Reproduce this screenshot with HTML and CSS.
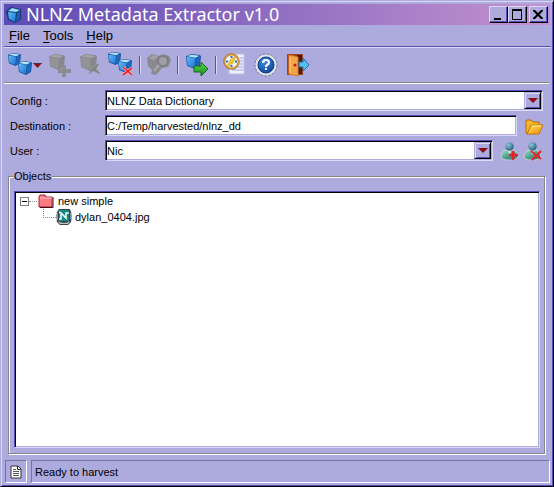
FILE: index.html
```html
<!DOCTYPE html>
<html lang="en">
<head>
<meta charset="utf-8">
<meta name="viewport" content="width=device-width, initial-scale=1">
<title>NLNZ Metadata Extractor v1.0</title>
<link rel="stylesheet" href="styles.css">
</head>
<body>
<svg class="defs" aria-hidden="true">
  <defs>
    <linearGradient id="face" x1="0" y1="0" x2="1" y2="1"><stop offset="0" stop-color="#5cbcfa"/><stop offset="1" stop-color="#2173d2"/></linearGradient>
    <linearGradient id="gold" x1="0" y1="0" x2="1" y2="1"><stop offset="0" stop-color="#ffe35a"/><stop offset="1" stop-color="#f08a08"/></linearGradient>
    <linearGradient id="green" x1="0" y1="0" x2="0" y2="1"><stop offset="0" stop-color="#5bdc4c"/><stop offset="1" stop-color="#138a1c"/></linearGradient>
    <linearGradient id="body" x1="0" y1="0" x2="1" y2="1"><stop offset="0" stop-color="#a8dcc8"/><stop offset=".5" stop-color="#4fa08c"/><stop offset="1" stop-color="#2c6c70"/></linearGradient>
    <radialGradient id="head" cx=".35" cy=".3" r=".8"><stop offset="0" stop-color="#8fc6d6"/><stop offset="1" stop-color="#1f5575"/></radialGradient>
    <radialGradient id="ball" cx=".4" cy=".3" r=".8"><stop offset="0" stop-color="#3f8fe0"/><stop offset="1" stop-color="#0b3c94"/></radialGradient>
    <symbol id="cube" viewBox="0 0 14 14">
      <path d="M0 2 5 0l8 1 1 1-1 9-5 3-7-3z" fill="#17509c"/>
      <path d="M1 2 5 .6l7.500 1L9 3.600z" fill="#b4e4ff"/>
      <path d="M.6 2.600 8.600 4 8 13 1.600 10.500z" fill="url(#face)"/>
      <path d="M9.200 4 13.200 2l-.8 8.500L8.700 13z" fill="#1d68bd"/>
    </symbol>
    <symbol id="graycube" viewBox="0 0 14 14">
      <path d="M0 2 5 0l8 1 1 1-1 9-5 3-7-3z" fill="#88888c"/>
      <path d="M1 2 5 .6l7.500 1L9 3.600z" fill="#a4a4a8"/>
      <path d="M.6 2.600 8.600 4 8 13 1.600 10.500z" fill="#939397"/>
    </symbol>
    <symbol id="user" viewBox="0 0 20 20">
      <path d="M1 16q0-6 6-7h5q5 1 6 7-2 3-9 3t-8-3z" fill="url(#body)" stroke="#d2dce2" stroke-width=".7"/>
      <path d="m7 9 2.500 5L12 9z" fill="#c4e7cd"/>
      <circle cx="9.500" cy="5.500" r="4.200" fill="url(#head)"/>
    </symbol>
  </defs>
</svg>
<div class="window">
  <header class="titlebar">
    <svg class="app-icon" viewBox="0 0 16 16" aria-hidden="true"><path d="M0 4 5 0l10 2v10l-6 4-7-3z" fill="#123a70"/><path d="m2 4 4-3 8 2-4 2z" fill="#9adcff"/><path d="m2 5 8 1-1 9-6-3z" fill="url(#face)"/><path d="m11 6 3-2v7l-4 4z" fill="#1b5faf"/></svg>
    <h1>NLNZ Metadata Extractor v1.0</h1>
    <div class="window-buttons">
      <button type="button" aria-label="Minimize"><svg viewBox="0 0 14 13"><path d="M3 10h7v2H3z"/></svg></button>
      <button type="button" aria-label="Maximize"><svg viewBox="0 0 14 13"><path fill-rule="evenodd" d="M2 1h10v11H2zm1 2v8h8V3z"/></svg></button>
      <button type="button" class="close" aria-label="Close"><svg viewBox="0 0 14 13"><path d="M2 2h2l3 3 3-3h2v1L8.500 6.500 12 10v1h-2L7 8l-3 3H2v-1l3.500-3.500L2 3z"/></svg></button>
    </div>
  </header>
  <nav class="menubar">
    <button type="button"><u>F</u>ile</button>
    <button type="button"><u>T</u>ools</button>
    <button type="button"><u>H</u>elp</button>
  </nav>
  <div class="toolbar" role="toolbar" aria-label="Main">
    <div class="tools">
      <button type="button" class="split" aria-label="New object">
        <svg class="icon" viewBox="0 0 24 24"><use href="#cube" width="13" height="13"/><use href="#cube" x="10" y="8" width="14" height="14"/></svg>
        <svg class="drop" viewBox="0 0 9 5"><path d="M0 0h9L4.500 5z" fill="#8c1018"/><path d="M0 0h9L8 1H1z" fill="#4a3040"/></svg>
      </button>
      <button type="button" disabled aria-label="Add object"><svg class="icon" viewBox="0 0 24 24"><use href="#graycube" y="1" width="16" height="16"/><path d="M13 12h4v4h5v4h-5v4h-4v-4H9v-4h4z" fill="#8d8d91"/></svg></button>
      <button type="button" disabled aria-label="Edit object"><svg class="icon" viewBox="0 0 24 24"><use href="#graycube" x="1" y="1" width="17" height="17"/><path d="m10 12 4 3 5-5 1 1-3 5 4 4-1 1-5-3-5 3v-1l3-4z" fill="#808085" stroke="#a2a2a8" stroke-width=".6"/></svg></button>
      <button type="button" aria-label="Delete object"><svg class="icon" viewBox="0 0 24 24"><use href="#cube" x="-1" y="-1" width="13" height="13"/><use href="#cube" x="9" y="6" width="14" height="14"/><path d="m14 14 9 8m0-7-9 7" fill="none" stroke="#f6b9c4" stroke-width="3"/><path d="m14 14 9 8m0-7-9 7" fill="none" stroke="#ed2027" stroke-width="1.600"/></svg></button>
    </div>
    <div class="tools">
      <button type="button" disabled aria-label="View"><svg class="icon" viewBox="0 0 24 24"><path d="M0 5 5 1l7 2 4-2 6 2 2 5-3 6-6 1-6 7-5-1 1-4-4-4z" fill="#8b8b8f"/><circle cx="16" cy="8" r="5" fill="#a0a0a4" stroke="#7e7e82" stroke-width="2"/><path d="m12 12-5 6" stroke="#a6a6ab" stroke-width="2"/><path d="m2 5 5-3 4 2-4 3z" fill="#a2a2a6"/></svg></button>
    </div>
    <div class="tools">
      <button type="button" aria-label="Harvest"><svg class="icon" viewBox="0 0 24 24"><use href="#cube" x="1" y="1" width="15" height="15"/><path d="M9 13h7V9l7 7-7 7v-4H9z" fill="url(#green)" stroke="#12681c"/></svg></button>
    </div>
    <div class="tools wide">
      <button type="button" aria-label="Options"><svg class="icon" viewBox="0 0 24 24"><path d="M9 1h12v20H6V12z" fill="#eef0ff" stroke="#b8bce4"/><path d="M17 5h3m-3 3h3m-3 3h3m-6 3h6M9 17h11" stroke="#9ca3dc"/><circle cx="8.500" cy="8.500" r="7" fill="#eef4fc" stroke="#d69a40" stroke-width="2"/><circle cx="8.500" cy="8.500" r="8" fill="none" stroke="#946126" stroke-width=".5"/><path d="M8.500 3v2m0 7v2M3 8.500h2m7 0h2" stroke="#3472b8" stroke-width="2"/><path d="m13 3-3 7-6 4 3-7z" fill="#f4ca24" stroke="#c39512" stroke-width=".5"/></svg></button>
      <button type="button" aria-label="Help"><svg class="icon" viewBox="0 0 24 24"><circle cx="11" cy="12" r="11" fill="#dfe3ed" stroke="#747c94" stroke-dasharray="3 1"/><circle cx="11" cy="12" r="8" fill="url(#ball)" stroke="#113c80"/><path d="M8 10q0-3 3-3t3 2.500q0 1.500-2 2.500-1 .5-1 2" fill="none" stroke="#fff" stroke-width="2.200"/><path d="M10 15h2v2h-2z" fill="#fff"/></svg></button>
      <button type="button" aria-label="Exit"><svg class="icon" viewBox="0 0 24 24"><path d="M0 1h16v21H0z" fill="#9f4314"/><path d="M10 2h5v19h-5z" fill="#4b1c0e"/><path d="m2 2 9 2v19l-9-2z" fill="#f4a447" stroke="#d97825"/><path d="M3 4v16" stroke="#ffd286"/><circle cx="8" cy="12" r="1.500" fill="#c5161b"/><path d="M12 9h4V5l6 7-6 6v-4h-4z" fill="#58bdf0" stroke="#1a73ac"/></svg></button>
    </div>
  </div>
  <main>
    <form class="form">
      <label for="config">Config :</label>
      <div class="line"><div class="combo"><select id="config"><option>NLNZ Data Dictionary</option></select><span class="arrow"></span></div></div>
      <label for="destination">Destination :</label>
      <div class="line">
        <input id="destination" type="text" value="C:/Temp/harvested/nlnz_dd">
        <button type="button" class="browse" aria-label="Browse"><svg viewBox="0 0 18 16"><path d="M1 2q0-1 1-1h4l2 2h6v4H7l-4 8H2l-1-1z" fill="#f6b52d" stroke="#b66b05"/><path d="M6 6h12l-4 9H2z" fill="url(#gold)" stroke="#c47605"/><path d="M7 7h9" stroke="#fff2a0"/></svg></button>
      </div>
      <label for="user-name">User :</label>
      <div class="line">
        <div class="combo"><select id="user-name"><option>Nic</option></select><span class="arrow"></span></div>
        <div class="user-actions">
          <button type="button" aria-label="Add user"><svg viewBox="0 0 20 20"><use href="#user"/><path d="M13 10v9m-4-5h9" stroke="#ee2024" stroke-width="2.500"/></svg></button>
          <button type="button" aria-label="Delete user"><svg viewBox="0 0 20 20"><use href="#user"/><path d="m8 10 10 8m0-8-9 9" stroke="#ee2024" stroke-width="2"/></svg></button>
        </div>
      </div>
    </form>
    <section class="objects" aria-labelledby="objects-title">
      <h2 id="objects-title">Objects</h2>
      <ul class="tree">
        <li>
          <div class="node"><button type="button" class="toggle" aria-label="Collapse"></button><span class="dots"></span>
            <svg class="folder" viewBox="0 0 16 14"><path d="M1 3 2 1h5l1 2h6v10H1z" fill="#fb7a84" stroke="#b01c2c"/><path d="M15 3v10.500H2" fill="none" stroke="#3c1018"/><path d="M2 4h12" stroke="#ffc8cc"/></svg>
            <span>new simple</span></div>
          <ul>
            <li class="node child"><span class="elbow"></span>
              <svg class="file" viewBox="0 0 16 16"><path d="M3 0h11l1 3 1 4-1 6-3 3H4l-3-3-1-6 1-4z" fill="#35454c"/><path d="M3 1h10v11H3z" fill="#138784"/><path d="m3 3 2 1 5 5V4h3M5 5v5H3" fill="none" stroke="#effcff" stroke-width="1.600"/><path d="M2 12q6 4 12 0l-2 3H4z" fill="#b7c5ca"/><path d="M1 4v7M15 4v6" stroke="#c6eeef"/></svg>
              <span>dylan_0404.jpg</span></li>
          </ul>
        </li>
      </ul>
    </section>
  </main>
  <footer class="statusbar">
    <div class="cell"><svg viewBox="0 0 12 14" aria-hidden="true"><path d="M1 1h7l3 3v9H1z" fill="#fff" stroke="#333"/><path d="M7.500 1v3.500H11" fill="none" stroke="#333"/><path d="M3 4.500h3m-3 2h6m-6 2h6m-6 2h6" stroke="#555"/></svg></div>
    <div class="cell message" role="status">Ready to harvest</div>
  </footer>
</div>
</body>
</html>
```
FILE: styles.css
```css
:root {
  --face: #adaadd;
  --light: #dcd8f8;
  --shade: #5b4bb5;
}

*, *::before { box-sizing: border-box; }

body {
  margin: 0;
  background: var(--face);
  color: #000;
  font: 11px/16px "Liberation Sans", Arial, sans-serif;
}

button {
  display: block;
  padding: 0;
  border: 0;
  background: none;
  color: inherit;
  font: inherit;
}

svg { display: block; }
.defs { position: absolute; width: 0; height: 0; }

.window {
  display: flex;
  flex-direction: column;
  min-height: 100vh;
  padding: 2px 2px 2px 3px;
  border: 1px solid #000;
  border-top-color: var(--face);
  border-left-color: var(--face);
  box-shadow: inset 1px 1px var(--light), inset -1px -1px var(--shade);
}

.titlebar {
  display: flex;
  align-items: center;
  height: 21px;
  margin: 1px 1px 0 0;
  padding: 0 2px;
  gap: 4px;
  background: linear-gradient(90deg, #5c4bb5, #c492cf);
  color: #fff;
}

.app-icon { width: 16px; height: 16px; }

h1 {
  flex: 1;
  margin: 0;
  font: 18px/21px "Noto Sans", sans-serif;
  white-space: nowrap;
}

.window-buttons { display: flex; }

.window-buttons button {
  width: 19px;
  height: 17px;
  border: 1px solid #000;
  border-top-color: var(--light);
  border-left-color: var(--light);
  background: var(--face);
  box-shadow: inset -1px -1px var(--shade);
}

.window-buttons .close { margin-left: 2px; }
.window-buttons svg { width: 14px; height: 13px; margin: 1px; }

.menubar {
  display: flex;
  gap: 13px;
  height: 22px;
  padding: 2px 5px;
  border-bottom: 1px solid var(--shade);
  box-shadow: 0 1px var(--light);
  font-size: 13px;
}

.menubar u { text-underline-offset: 2px; }

.toolbar {
  display: flex;
  align-items: center;
  height: 36px;
  margin-right: 2px;
  padding: 1px 4px 0;
  border-bottom: 1px solid #85858a;
  box-shadow: 0 1px #fff;
}

.tools { display: flex; gap: 6px; }
.tools.wide { gap: 8px; }

.tools + .tools::before {
  content: "";
  width: 2px;
  height: 18px;
  margin: 3px 0 0 6px;
  border-left: 1px solid var(--shade);
  border-right: 1px solid var(--light);
}

.tools.wide::before { margin-right: -2px; }
.icon { width: 24px; height: 24px; overflow: visible; }
.split { display: flex; align-items: center; gap: 1px; }
.drop { width: 9px; height: 5px; }
.split + button { margin-left: 1px; }

main {
  display: flex;
  flex: 1;
  flex-direction: column;
  padding: 7px 6px 0 4px;
}

.form {
  display: grid;
  grid-template-columns: 95px 1fr;
  row-gap: 4px;
  padding: 0 2px;
  align-items: center;
}

.line { display: flex; }

.combo {
  position: relative;
  flex: 1;
}

.combo select, .line input {
  display: block;
  width: 100%;
  height: 21px;
  padding: 0;
  border: 1px solid var(--light);
  border-top-color: var(--shade);
  border-left-color: var(--shade);
  border-radius: 0;
  background: #fff;
  box-shadow: inset 1px 1px #000, inset -1px -1px var(--face);
  color: #000;
  font: inherit;
  appearance: none;
}

.combo select { padding-left: 1px; }
.line input { flex: 1; min-width: 0; padding-left: 1px; }

.combo .arrow {
  position: absolute;
  top: 2px;
  right: 2px;
  bottom: 2px;
  display: grid;
  place-items: center;
  width: 17px;
  border: 1px solid #000;
  border-top-color: var(--face);
  border-left-color: var(--face);
  background: var(--face);
  box-shadow: inset 1px 1px var(--light), inset -1px -1px var(--shade);
  pointer-events: none;
}

.arrow::before {
  content: "";
  border: 5px solid transparent;
  border-top-color: #8b0b17;
  border-bottom: 0;
}

.browse { margin: 2px 0 0 8px; }
.browse svg { width: 18px; height: 16px; }
.user-actions { display: flex; gap: 3px; margin-left: 7px; }
.user-actions svg { width: 20px; height: 20px; }

.objects {
  display: flex;
  flex: 1;
  flex-direction: column;
  margin-top: 15px;
  padding: 0 4px 5px 5px;
  border: 1px solid #85858a;
  box-shadow: 1px 1px #fff, inset 1px 1px #fff;
}

.objects h2 {
  align-self: flex-start;
  margin: -9px 0 7px -1px;
  padding: 0 1px;
  background: var(--face);
  font: inherit;
}

.tree, .tree ul {
  margin: 0;
  padding: 0;
  list-style: none;
}

.tree {
  flex: 1;
  padding: 1px 5px;
  border: 1px solid var(--light);
  border-top-color: var(--shade);
  border-left-color: var(--shade);
  background: #fff;
  box-shadow: inset 1px 1px #000, inset -1px -1px var(--face);
}

.node { display: flex; align-items: center; height: 16px; }

.toggle {
  width: 9px;
  height: 9px;
  border: 1px solid #808080;
  background: linear-gradient(#000, #000) center / 5px 1px no-repeat;
}

.dots { width: 8px; border-top: 1px dotted #888; }
.folder { width: 16px; height: 14px; margin: 0 4px 0 1px; }
.child { padding-left: 23px; }
.elbow {
  align-self: flex-start;
  width: 13px;
  height: 9px;
  border-left: 1px dotted #888;
  border-bottom: 1px dotted #888;
}
.file { width: 16px; height: 16px; margin-right: 3px; }

.statusbar {
  display: flex;
  gap: 4px;
  padding: 6px 1px 1px 1px;
}

.cell {
  display: grid;
  place-items: center;
  width: 22px;
  height: 23px;
  border: 1px solid #fff;
  border-top-color: #77749a;
  border-left-color: #77749a;
}

.cell svg { width: 12px; height: 14px; }

.message {
  flex: 1;
  justify-items: start;
  padding-left: 3px;
}
```
